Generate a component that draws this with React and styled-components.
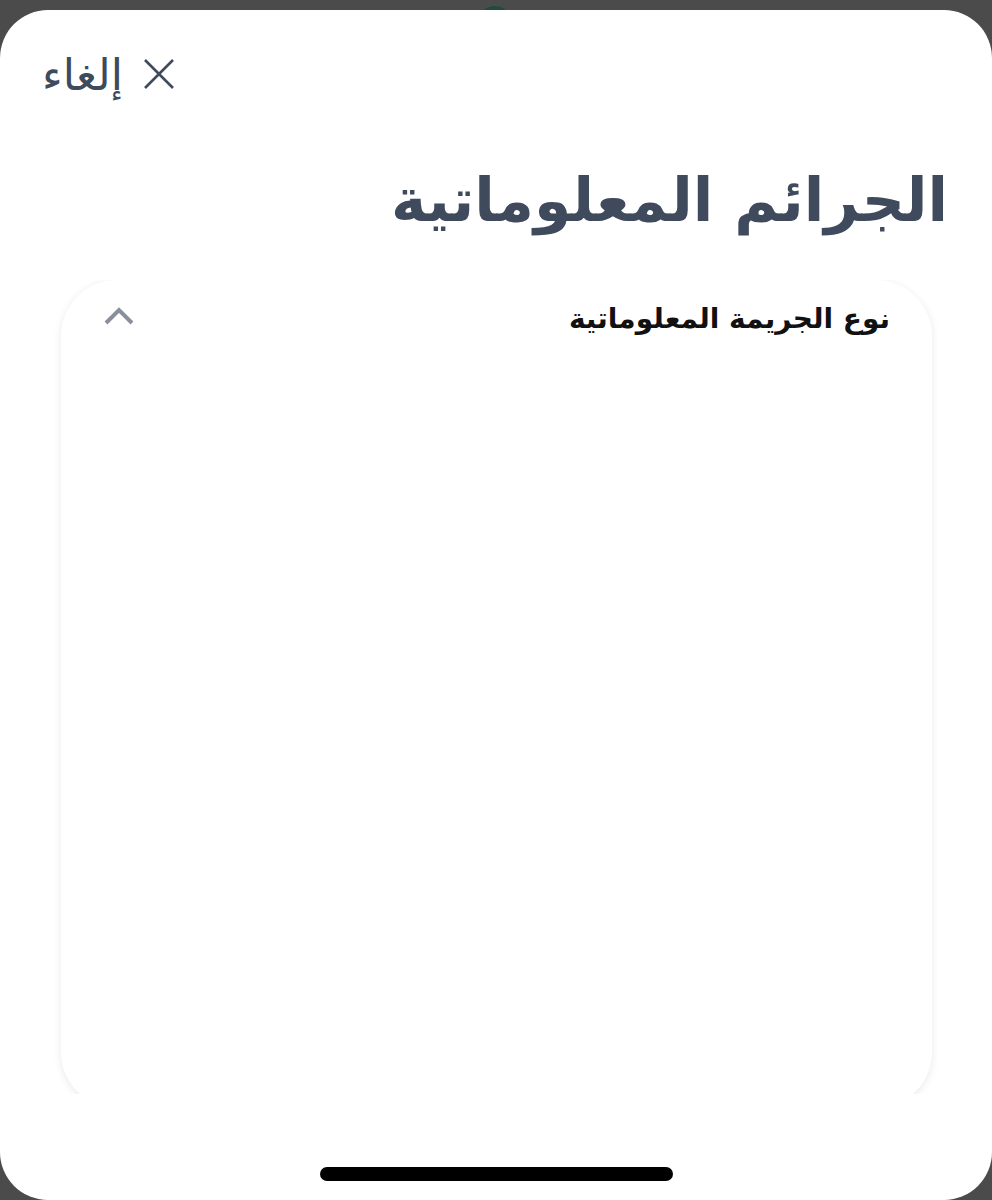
import React, { useState } from "react";
import styled, { createGlobalStyle } from "styled-components";

const GlobalStyle = createGlobalStyle`
  html, body {
    margin: 0;
    padding: 0;
    background: #4b4b4b;
  }
  * {
    box-sizing: border-box;
  }
`;

export default function App() {
  const [open, setOpen] = useState(true);

  return (
    <>
      <GlobalStyle />
      <Backdrop>
        <PeekDot />
      </Backdrop>
      <Sheet dir="rtl">
        <TopBar>
          <CancelButton type="button">
            <CloseIcon viewBox="0 0 32 32">
              <path d="M2 2 L30 30 M30 2 L2 30" />
            </CloseIcon>
            <span>إلغاء</span>
          </CancelButton>
        </TopBar>

        <Title>الجرائم المعلوماتية</Title>

        <CardClip>
          <Card>
            <CardHeader onClick={() => setOpen(!open)}>
              <CardLabel>نوع الجريمة المعلوماتية</CardLabel>
              <Chevron viewBox="0 0 32 20" $open={open}>
                <path d="M3 17 L16 4 L29 17" />
              </Chevron>
            </CardHeader>
          </Card>
        </CardClip>

        <HomeBar />
      </Sheet>
    </>
  );
}

const Backdrop = styled.div`
  height: 10px;
  position: relative;
  overflow: hidden;
`;

const PeekDot = styled.div`
  position: absolute;
  left: 478px;
  top: 6px;
  width: 34px;
  height: 34px;
  border-radius: 50%;
  background: #1f4d3a;
`;

const Sheet = styled.div`
  height: 1190px;
  background: #ffffff;
  border-radius: 48px;
  display: flex;
  flex-direction: column;
  font-family: "DejaVu Sans", "Noto Sans", sans-serif;
  position: relative;
  z-index: 1;
`;

const TopBar = styled.div`
  display: flex;
  justify-content: flex-end;
  padding: 38px 0 0 0;
  height: 112px;
`;

const CancelButton = styled.button`
  display: flex;
  align-items: center;
  gap: 20px;
  height: 52px;
  padding: 0;
  margin-left: 42px;
  border: none;
  background: none;
  color: #3f4a5c;
  font-family: inherit;
  font-size: 44px;
  cursor: pointer;
`;

const CloseIcon = styled.svg`
  width: 32px;
  height: 32px;
  fill: none;
  stroke: #3f4a5c;
  stroke-width: 2.6;
`;

const Title = styled.h1`
  margin: 38px 44px 0 44px;
  font-size: 60px;
  font-weight: bold;
  color: #3f4a5c;
  line-height: 80px;
`;

const CardClip = styled.div`
  margin: 40px 54px 0 55px;
  height: 814px;
  overflow: hidden;
  padding: 0 6px;
`;

const Card = styled.div`
  height: 828px;
  background: #ffffff;
  border-radius: 56px;
  box-shadow: 0 2px 8px rgba(0, 0, 0, 0.09);
`;

const CardHeader = styled.div`
  display: flex;
  align-items: center;
  justify-content: space-between;
  padding: 22px 42px 0 42px;
  cursor: pointer;
`;

const CardLabel = styled.div`
  font-size: 28px;
  font-weight: bold;
  color: #111111;
`;

const Chevron = styled.svg`
  width: 32px;
  height: 20px;
  margin-top: -5px;
  fill: none;
  stroke: #8a8f9c;
  stroke-width: 4;
  transform: ${(p) => (p.$open ? "none" : "rotate(180deg)")};
`;

const HomeBar = styled.div`
  width: 353px;
  height: 14px;
  border-radius: 7px;
  background: #000000;
  margin: auto auto 19px auto;
`;
